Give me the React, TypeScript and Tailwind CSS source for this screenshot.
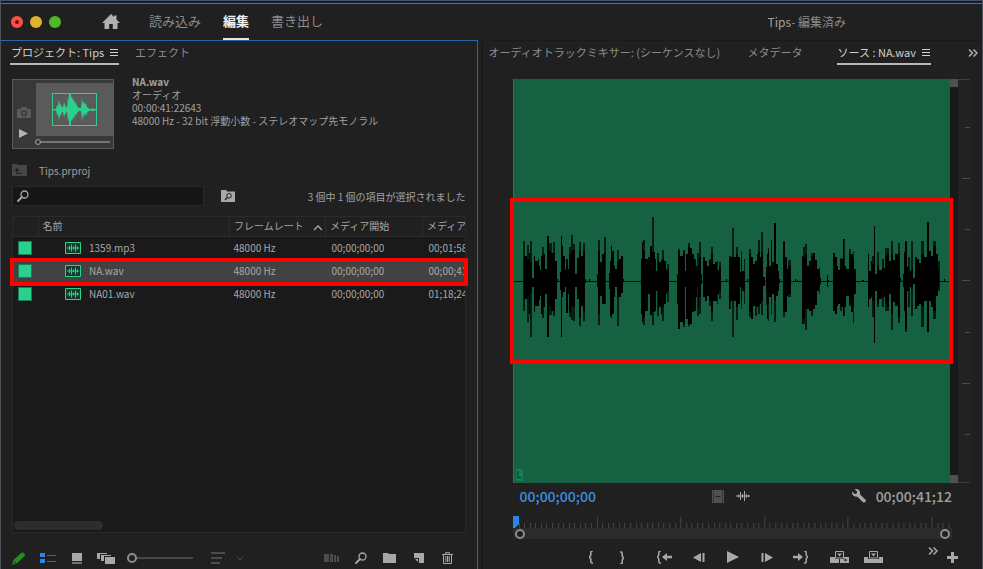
import type { ReactNode } from "react";

type Bar = [number, number, number, number];

// Each bar: start, end, top, bottom, in thirds of a pixel, measured per section.
const SECTION_A: Bar[] = [
  [69, 78, 197, 325], [78, 84, 205, 320], [84, 87, 187, 370], [87, 92, 215, 307], [92, 98, 262, 290],
  [98, 102, 197, 363], [102, 111, 212, 345], [111, 114, 205, 345], [114, 117, 225, 327], [117, 120, 238, 315],
  [120, 126, 195, 370], [126, 132, 190, 350], [132, 138, 235, 310], [138, 144, 135, 440], [141, 150, 180, 345],
  [150, 162, 187, 360], [162, 168, 210, 325], [168, 171, 265, 275], [177, 180, 245, 298], [180, 184, 135, 440],
  [184, 187, 165, 320], [187, 192, 197, 305], [192, 195, 237, 290], [195, 201, 205, 368], [201, 204, 235, 310],
  [204, 210, 190, 365], [210, 216, 182, 345], [216, 222, 178, 348], [222, 228, 250, 290], [228, 234, 203, 325],
  [234, 240, 180, 380], [240, 245, 195, 345], [245, 251, 180, 360], [251, 254, 265, 276], [264, 267, 266, 274],
  [288, 291, 250, 290], [291, 297, 180, 370], [297, 303, 215, 315], [303, 308, 190, 340], [308, 313, 185, 338],
  [324, 327, 247, 295], [327, 330, 210, 375], [330, 334, 165, 383], [334, 339, 180, 370], [339, 342, 225, 320],
  [342, 348, 235, 290], [348, 354, 210, 320], [354, 360, 205, 320], [360, 365, 195, 308], [365, 369, 266, 275],
  [420, 423, 205, 370], [423, 427, 155, 393], [427, 432, 180, 380], [432, 440, 205, 360], [440, 447, 200, 310],
];
const SECTION_B: Bar[] = [
  [-3, 4, 165, 372], [4, 12, 185, 365], [12, 15, 205, 360], [15, 20, 240, 300], [20, 24, 205, 355],
  [24, 30, 215, 350], [30, 35, 207, 370], [35, 40, 205, 350], [40, 45, 210, 340], [45, 50, 238, 310],
  [50, 56, 235, 300], [80, 84, 250, 340], [82, 88, 180, 415], [88, 98, 195, 395], [98, 102, 185, 400],
  [102, 106, 240, 290], [106, 111, 190, 385], [111, 117, 170, 400], [117, 123, 172, 400], [123, 129, 190, 365],
  [129, 135, 205, 360], [135, 138, 225, 320], [138, 142, 238, 290], [142, 145, 225, 350], [145, 151, 200, 320],
  [151, 154, 250, 280], [156, 162, 200, 320], [162, 168, 212, 332], [168, 174, 225, 315], [174, 180, 212, 330],
  [180, 186, 190, 365], [186, 192, 220, 330], [192, 198, 215, 332], [198, 204, 238, 310], [204, 210, 230, 300],
  [226, 229, 266, 273], [236, 239, 205, 355], [239, 256, 198, 330], [256, 261, 190, 350], [261, 268, 200, 340],
  [268, 271, 245, 290], [271, 274, 205, 330], [274, 282, 240, 300], [288, 291, 266, 273], [294, 300, 190, 365],
  [300, 306, 200, 385], [306, 312, 220, 345], [312, 318, 210, 345], [318, 321, 190, 350], [321, 327, 185, 345],
  [327, 330, 200, 340], [330, 336, 185, 330], [336, 342, 258, 285], [345, 348, 230, 300], [348, 351, 190, 385],
  [351, 356, 180, 340], [356, 360, 225, 320], [360, 363, 150, 320], [363, 369, 213, 310], [369, 375, 97, 330],
  [375, 381, 220, 315], [381, 386, 240, 302], [386, 389, 265, 276], [397, 402, 155, 360], [402, 408, 200, 365],
  [408, 413, 235, 315], [413, 420, 225, 310], [432, 435, 266, 274], [438, 442, 267, 274],
];
const SECTION_C: Bar[] = [
  [5, 8, 195, 400], [8, 12, 200, 385], [12, 18, 190, 355], [18, 24, 225, 355], [24, 30, 210, 360],
  [30, 36, 195, 360], [36, 42, 187, 355], [42, 48, 207, 342], [48, 54, 235, 300], [54, 59, 238, 290],
  [59, 62, 262, 280], [78, 81, 255, 288], [81, 86, 267, 274], [96, 102, 187, 360], [102, 108, 200, 370],
  [108, 112, 225, 345], [112, 118, 238, 340], [118, 126, 205, 350], [126, 130, 145, 375], [130, 136, 225, 350],
  [136, 144, 235, 315], [144, 150, 190, 340], [150, 156, 190, 365], [156, 161, 205, 350], [161, 166, 235, 310],
  [183, 190, 267, 273], [202, 205, 190, 350], [205, 210, 240, 325], [210, 214, 210, 320], [214, 219, 220, 330],
  [219, 223, 105, 458], [223, 229, 250, 300], [229, 234, 225, 340], [234, 243, 238, 325], [243, 252, 232, 320],
  [252, 258, 195, 340], [258, 264, 190, 350], [264, 270, 210, 310], [270, 276, 190, 370], [276, 282, 208, 335],
  [282, 291, 190, 345], [291, 297, 188, 380], [297, 300, 262, 275], [306, 309, 250, 290], [309, 312, 185, 360],
  [312, 318, 155, 415], [318, 324, 230, 300], [324, 330, 240, 290], [330, 336, 235, 295], [336, 342, 262, 280],
  [342, 348, 200, 355], [348, 354, 205, 345], [354, 362, 218, 340], [362, 369, 190, 345], [369, 380, 200, 330],
  [380, 384, 95, 425], [384, 391, 180, 330], [391, 398, 195, 350], [398, 405, 165, 360], [405, 411, 190, 315],
  [411, 415, 235, 290], [430, 434, 266, 273],
];
// Short peaks that are drawn lighter than the body of the wave.
const PEAKS: Bar[] = [
  [66, 72, 150, 360], [78, 83, 162, 395], [87, 92, 150, 440], [123, 129, 170, 382], [144, 153, 158, 372],
  [157, 163, 155, 375], [204, 210, 170, 380], [210, 216, 132, 387], [216, 222, 160, 390], [234, 240, 155, 405],
  [245, 251, 158, 390], [291, 297, 147, 403], [308, 314, 140, 340], [348, 354, 178, 407], [427, 432, 147, 403],
  [453, 459, 78, 403], [468, 474, 187, 375], [485, 490, 178, 392], [500, 506, 220, 335], [532, 538, 175, 415],
  [548, 552, 178, 410], [561, 567, 158, 405], [589, 595, 187, 375], [595, 601, 155, 370], [624, 630, 205, 345],
  [630, 636, 168, 392], [648, 651, 212, 340], [654, 660, 215, 325], [685, 690, 195, 355], [693, 699, 112, 440],
  [706, 712, 168, 388], [720, 724, 180, 355], [729, 732, 205, 340], [744, 750, 175, 380], [762, 768, 210, 375],
  [771, 777, 147, 370], [780, 786, 123, 372], [795, 798, 230, 342], [801, 806, 172, 390], [810, 813, 147, 372],
  [819, 825, 97, 395], [847, 853, 150, 380], [863, 870, 208, 320], [908, 913, 170, 400], [912, 918, 160, 418],
  [930, 936, 187, 375], [954, 959, 230, 310], [978, 981, 252, 290], [1018, 1024, 203, 362], [1026, 1032, 145, 377],
  [1044, 1050, 175, 345], [1056, 1061, 182, 398], [1114, 1119, 195, 380], [1129, 1134, 183, 350],
  [1143, 1149, 205, 350], [1152, 1164, 172, 360], [1170, 1176, 150, 418], [1191, 1197, 158, 397],
  [1212, 1218, 150, 425], [1222, 1227, 200, 350], [1230, 1236, 150, 375], [1262, 1269, 150, 410],
  [1280, 1286, 118, 425], [1298, 1305, 152, 385], [1311, 1317, 210, 300],
];

const drawBars = (bars: Bar[]) => bars.map(([a, b, t, d]) => `M${a} ${t}H${b}V${d}H${a}Z`).join("");

function Waveform() {
  return (
    <svg className="block h-[180px] w-full" viewBox="39 1 1311 540" preserveAspectRatio="none" shapeRendering="crispEdges" aria-hidden="true">
      <path d={drawBars(PEAKS)} fill="#000" opacity="0.7" />
      <path d={drawBars(SECTION_A)} />
      <path d={drawBars(SECTION_B)} transform="translate(450 0)" />
      <path d={drawBars(SECTION_C)} transform="translate(900 0)" />
      <path d="M39 270H1350V273H39Z" opacity="0.8" />
    </svg>
  );
}

function Icon({ w, h, children, className = "" }: { w: number; h: number; children: ReactNode; className?: string }) {
  return (
    <svg width={w} height={h} viewBox={`0 0 ${w} ${h}`} className={`shrink-0 ${className}`} fill="currentColor" aria-hidden="true">
      {children}
    </svg>
  );
}

function IconButton({ label, className = "", children }: { label: string; className?: string; children: ReactNode }) {
  return (
    <button type="button" aria-label={label} className={`flex shrink-0 items-center justify-center ${className}`}>
      {children}
    </button>
  );
}

const MenuIcon = () => (
  <Icon w={8} h={7}><path d="M0 0H8V1H0ZM0 3H8V4H0ZM0 6H8V7H0Z" /></Icon>
);

const SearchIcon = () => (
  <Icon w={12} h={12}>
    <circle cx="7.5" cy="4.5" r="3.5" fill="none" stroke="currentColor" strokeWidth="1.3" />
    <path d="M5 7L1 11" stroke="currentColor" strokeWidth="1.8" strokeLinecap="round" />
  </Icon>
);

const DoubleChevron = () => (
  <Icon w={10} h={8}><path d="M1 0.5L4.5 4L1 7.5M5.5 0.5L9 4L5.5 7.5" fill="none" stroke="currentColor" strokeWidth="1.5" /></Icon>
);

const ClipIcon = () => (
  <Icon w={16} h={12} className="text-[#2bd08c]">
    <path d="M0.5 0.5H15.5V11.5H0.5Z" fill="#123c2c" stroke="currentColor" />
    <path d="M2 6H14M4.5 4V8M6.5 2.5V9.5M8.5 4.5V7.5M10.5 2.5V9.5M12.5 4.5V7.5" stroke="currentColor" />
  </Icon>
);

const SLIDER =
  "block h-3 cursor-pointer appearance-none bg-transparent [&::-webkit-slider-runnable-track]:h-[2px] [&::-webkit-slider-thumb]:appearance-none [&::-webkit-slider-thumb]:rounded-full [&::-webkit-slider-thumb]:border-solid";

const FILES = [
  { name: "1359.mp3", rate: "48000 Hz", start: "00;00;00;00", end: "00;01;58", selected: false },
  { name: "NA.wav", rate: "48000 Hz", start: "00;00;00;00", end: "00;00;41", selected: true },
  { name: "NA01.wav", rate: "48000 Hz", start: "00;00;00;00", end: "01;18;24", selected: false },
];

function TopBar() {
  return (
    <header className="flex h-9 shrink-0 items-center text-[13px] text-[#8c8c8c]">
      <div className="flex gap-[7px] pl-[10px]">
        <button type="button" aria-label="閉じる" className="flex size-3 items-center justify-center rounded-full bg-[#fc4f48]">
          <span className="size-1 rounded-full bg-[#7d0a06]" />
        </button>
        <button type="button" aria-label="しまう" className="size-3 rounded-full bg-[#e0b32c]" />
        <button type="button" aria-label="拡大" className="size-3 rounded-full bg-[#4dba29]" />
      </div>
      <IconButton label="ホーム" className="ml-[41px] text-[#b0b0b0]">
        <Icon w={18} h={16}>
          <path d="M9 0L12 3V1.5H14.5V5.5L18 9H15.5V15H10.8V10H7.2V15H2.5V9H0Z" />
        </Icon>
      </IconButton>
      <nav className="ml-[29px] flex h-full gap-[22px]">
        <button type="button" className="border-b-2 border-transparent">読み込み</button>
        <button type="button" className="border-b-2 border-[#e6e6e6] font-bold text-[#f0f0f0]">編集</button>
        <button type="button" className="border-b-2 border-transparent">書き出し</button>
      </nav>
      <p className="mr-[136px] ml-auto text-[12px]"><span className="text-[#a0a0a0]">Tips</span>- 編集済み</p>
    </header>
  );
}

function Preview() {
  return (
    <div className="flex h-[70px] w-[102px] shrink-0 border border-[#5a5a5a] bg-[#383838]">
      <div className="flex w-[23px] flex-col items-center gap-[11px] pt-[27px] pr-[2px]">
        <IconButton label="ポスターフレーム" className="text-[#5a5a5a]">
          <Icon w={14} h={11}>
            <path fillRule="evenodd" d="M0 2H3.5L4.5 0H9.5L10.5 2H14V11H0ZM7 3.2A3 3 0 1 0 7 9.2A3 3 0 1 0 7 3.2ZM7 4.5A1.7 1.7 0 1 1 7 7.9A1.7 1.7 0 1 1 7 4.5Z" />
          </Icon>
        </IconButton>
        <IconButton label="プレビュー再生" className="text-[#b4b4b4]">
          <Icon w={9} h={9}><path d="M0 0L9 4.5L0 9Z" /></Icon>
        </IconButton>
      </div>
      <div className="flex flex-1 flex-col pt-[3px]">
        <div className="flex flex-1 items-center justify-center bg-[#5a5a5a]">
          <Icon w={45} h={33} className="text-[#2bd08c]">
            <rect x="0.5" y="0.5" width="44" height="32" fill="none" stroke="currentColor" />
            <path d="M1 16H4L5 12L6 13L7 7L8 11L9 12L10 14H11L12 9L13 12L14 14L15 15L16 3L17 8V1H19V5L20 3L21 8L22 6L23 11L24 9L25 13L27 15H29L30 5L31 11L32 8L33 12L34 10L35 14L37 15.5L39 16L41 15.5L42 16H44V17.5H42L41 18.5L39 17.5L37 18L35 20L34 23L33 20L32 25L31 21L30 28L29 18H27L25 20L24 23L23 21L22 26L21 24L20 29L19 26V32H17V24L16 29L15 18L14 20L13 21L12 25L11 19H10L9 22L8 23L7 27L6 21L5 22L4 17.5H1Z" />
          </Icon>
        </div>
        <input
          type="range"
          aria-label="再生位置"
          defaultValue={0}
          className={`${SLIDER} -ml-px h-2 w-[75px] [&::-webkit-slider-runnable-track]:bg-[#747474] [&::-webkit-slider-thumb]:-mt-[2px] [&::-webkit-slider-thumb]:size-[6px] [&::-webkit-slider-thumb]:border [&::-webkit-slider-thumb]:border-[#a0a0a0] [&::-webkit-slider-thumb]:bg-[#383838]`}
        />
      </div>
    </div>
  );
}

function FileTable() {
  const th = "overflow-hidden border-r border-[#2b2b2b] pl-1 text-left font-normal whitespace-nowrap";
  const td = "overflow-hidden pl-1 whitespace-nowrap";
  return (
    <table className="w-full table-fixed border-collapse text-[10px] leading-[14px] text-[#a8a8a8]">
      <colgroup>
        <col className="w-[25px]" />
        <col />
        <col className="w-24" />
        <col className="w-[97px]" />
        <col className="w-[42px]" />
      </colgroup>
      <thead>
        <tr className="h-[19px] border-b border-[#2b2b2b] bg-[#202020]">
          <th className={th} aria-label="ラベル" />
          <th className={th}>名前</th>
          <th className={th}>
            <div className="flex items-center justify-between pr-[2px]">
              フレームレート
              <Icon w={10} h={6} className="mt-1"><path d="M1 5L5 1L9 5" fill="none" stroke="currentColor" strokeWidth="1.3" /></Icon>
            </div>
          </th>
          <th className={th}>メディア開始</th>
          <th className={`${th} border-r-0`}>メディア</th>
        </tr>
      </thead>
      <tbody>
        {FILES.map((f) => (
          <tr key={f.name} className={f.selected ? "relative h-[23px] bg-[#424242]" : "h-[23px]"}>
            <td className="pl-[5px]">
              <span className="block size-[14px] border border-[#1b7c55] bg-[#28d18c]" />
              {f.selected && (
                <span className="pointer-events-none absolute -inset-x-[3px] -top-px -bottom-1 z-10 border-4 border-[#ff0000]" />
              )}
            </td>
            <td className={td}>
              <div className="flex items-center gap-2 pl-[23px]"><ClipIcon />{f.name}</div>
            </td>
            <td className={td}>{f.rate}</td>
            <td className={`${td} pl-[6px]`}>{f.start}</td>
            <td className={`${td} pl-[6px]`}>{f.end}</td>
          </tr>
        ))}
      </tbody>
    </table>
  );
}

function ListTools() {
  return (
    <div className="flex h-9 shrink-0 items-center pt-[14px] pl-[11px] text-[#a8a8a8]">
      <IconButton label="書き込み可能" className="text-[#1d921d]">
        <Icon w={14} h={13}><path d="M0 13L1.5 8L9.5 0.8Q10.5 -0.2 12 1.2Q13.8 2.8 12.6 4L5 11.3ZM2 11.5L4 10.8L2.7 9.4Z" fillRule="evenodd" /></Icon>
      </IconButton>
      <IconButton label="リスト表示" className="ml-[14px] text-[#2b84ea]">
        <Icon w={16} h={10}><path d="M0 0H5V4H0ZM0 6H5V10H0Z" /><path d="M7 2H16V3H7ZM7 8H16V9H7Z" opacity="0.75" /></Icon>
      </IconButton>
      <IconButton label="アイコン表示" className="ml-4">
        <Icon w={10} h={11}><path d="M0 0H10V8H0Z" /><path d="M0 9H10V11H0Z" opacity="0.6" /></Icon>
      </IconButton>
      <IconButton label="フリーフォーム表示" className="ml-[15px]">
        <Icon w={18} h={11}><path d="M0 0H10V1H3V6H0ZM4 2H14V3H7V8H4ZM8 4H18V11H8Z" /></Icon>
      </IconButton>
      <input
        type="range"
        aria-label="サムネールのサイズ"
        defaultValue={0}
        className={`${SLIDER} ml-3 w-[66px] [&::-webkit-slider-runnable-track]:bg-[#474747] [&::-webkit-slider-thumb]:-mt-1 [&::-webkit-slider-thumb]:size-[10px] [&::-webkit-slider-thumb]:border-2 [&::-webkit-slider-thumb]:border-[#8c8c8c] [&::-webkit-slider-thumb]:bg-[#202020]`}
      />
      <IconButton label="並べ替え" className="ml-[18px] gap-[11px] text-[#4c4c4c]">
        <Icon w={14} h={12}><path d="M0 0H14V2H0ZM0 5H11V7H0ZM0 10H9V12H0Z" /></Icon>
        <Icon w={8} h={5}><path d="M1 0.5L4 4L7 0.5" fill="none" stroke="currentColor" /></Icon>
      </IconButton>
      <div className="mr-6 ml-auto flex items-center">
        <IconButton label="シーケンスに自動化" className="text-[#4c4c4c]">
          <Icon w={15} h={8}><path d="M0 0H5V8H0ZM6 0H9V8H6ZM10 1H12V8H10ZM13 2H15V8H13Z" /></Icon>
        </IconButton>
        <IconButton label="検索" className="ml-4"><SearchIcon /></IconButton>
        <IconButton label="新規ビン" className="ml-4">
          <Icon w={13} h={10}><path d="M0 0H5L6 1H13V10H0Z" /></Icon>
        </IconButton>
        <IconButton label="新規項目" className="ml-[18px]">
          <Icon w={10} h={10}><path d="M0 0H10V10H5V5H0Z" /><path d="M1 6H4V9Z" /></Icon>
        </IconButton>
        <IconButton label="消去" className="ml-[18px]">
          <Icon w={11} h={12}><path d="M0 2.5H11M3.5 2.5V0.7H7.5V2.5M1.5 3V11.5H9.5V3M3.8 4V10M5.5 4V10M7.2 4V10" fill="none" stroke="currentColor" /></Icon>
        </IconButton>
      </div>
    </div>
  );
}

function ProjectPanel() {
  return (
    <section className="flex min-h-0 min-w-0 flex-col border-t border-r border-[#2767a8] bg-[#202020] text-[#a0a0a0]">
      <nav className="flex h-6 items-stretch pl-[9px] text-[11px]">
        <button type="button" className="flex items-center gap-[6px] border-b-2 border-[#b8b8b8] pr-px pl-px text-[#d0d0d0]">
          プロジェクト: Tips<MenuIcon />
        </button>
        <button type="button" className="ml-4 border-b-2 border-transparent text-[#8c8c8c]">エフェクト</button>
      </nav>
      <div className="flex gap-[18px] pl-[11px]">
        <div className="pt-[14px]"><Preview /></div>
        <div className="pt-[10px] text-[10px] leading-[13px]">
          <p className="font-bold">NA.wav</p>
          <p>オーディオ</p>
          <p>00:00:41:22643</p>
          <p>48000 Hz - 32 bit 浮動小数 - ステレオマップ先モノラル</p>
        </div>
      </div>
      <div className="mt-[13px] flex h-4 items-center gap-3 pl-[11px] text-[10px]">
        <IconButton label="上の階層へ" className="text-[#464646]">
          <Icon w={15} h={12}><path fillRule="evenodd" d="M0 0H5L6 1H15V12H0ZM5 4L2.5 7H4.5V10H10V9H5.5V7H7.5Z" /></Icon>
        </IconButton>
        Tips.prproj
      </div>
      <div className="mt-2 mr-[11px] flex h-5 items-center pl-[11px] text-[10px]">
        <label className="flex h-5 w-48 items-center border border-[#292929] bg-[#161616] pl-1 text-[#a8a8a8]">
          <SearchIcon />
          <input type="search" aria-label="プロジェクト内を検索" className="h-full w-full min-w-0 bg-transparent px-2 outline-none" />
        </label>
        <IconButton label="検索ビンを作成" className="ml-[17px] text-[#a8a8a8]">
          <Icon w={14} h={12}>
            <path d="M0 0H5L6 1.5H14V12H0Z" />
            <circle cx="8" cy="5.8" r="2.3" fill="none" stroke="#202020" />
            <path d="M6.3 7.5L4 10" stroke="#202020" strokeWidth="1.4" />
          </Icon>
        </IconButton>
        <p className="ml-auto whitespace-nowrap">3 個中 1 個の項目が選択されました</p>
      </div>
      <div className="mt-[10px] mr-[11px] ml-[11px] flex flex-1 flex-col border border-[#2a2a2a] bg-[#1a1a1a]">
        <FileTable />
        <div className="mt-auto mb-[2px] ml-px h-[9px] w-[89px] rounded-full bg-[#2d2d2d]" />
      </div>
      <ListTools />
    </section>
  );
}

function Meter() {
  return (
    <div className="flex w-5 shrink-0">
      <div className="flex w-2 flex-col justify-between bg-[#191919]">
        <span className="h-2 bg-[#505050]" />
        <span className="h-2 bg-[#505050]" />
      </div>
      <div className="flex flex-1 flex-col items-end justify-between border-y border-[#3c3c3c] bg-[#222222] py-[47px]">
        {[0, 1, 2, 3, 4, 5, 6].map((i) => (
          <span key={i} className={i % 2 ? "h-px w-2 bg-[#4a4a4a]" : "h-px w-[5px] bg-[#4a4a4a]"} />
        ))}
      </div>
    </div>
  );
}

function TimeRuler() {
  const ticks = Array.from({ length: 78 }, (_, i) => i + 1);
  return (
    <div className="mr-[18px]">
      <svg className="block h-3 w-full overflow-visible" viewBox="0 0 439 12" preserveAspectRatio="none" aria-hidden="true">
        {ticks.map((i) => (
          <path key={i} d={`M${Math.round(i * 5.573)} ${i % 15 ? 7 : 1}h1V12h-1Z`} fill="#454545" />
        ))}
        <path d="M0 0H6V8L2 12H0Z" fill="#2b84ea" />
      </svg>
      <div className="flex h-[11px] items-center justify-between bg-[#2b2b2b] px-[2px]">
        <button type="button" aria-label="表示範囲の開始" className="size-[10px] rounded-full border-2 border-[#8c8c8c] bg-[#202020]" />
        <button type="button" aria-label="表示範囲の終了" className="size-[10px] rounded-full border-2 border-[#8c8c8c] bg-[#202020]" />
      </div>
    </div>
  );
}

const BRACE_OPEN = "M4 0H3Q1.8 0 1.8 1.5V4L0.5 6L1.8 8V10.5Q1.8 12 3 12H4";

function Transport() {
  return (
    <div className="flex h-[30px] shrink-0 items-center pt-[6px] pl-[94px] text-[#a8a8a8]">
      <IconButton label="インをマーク" className="w-[30px]">
        <Icon w={5} h={13}><path d={BRACE_OPEN} fill="none" stroke="currentColor" strokeWidth="1.6" /></Icon>
      </IconButton>
      <IconButton label="アウトをマーク" className="w-[30px]">
        <Icon w={5} h={13} className="rotate-180"><path d={BRACE_OPEN} fill="none" stroke="currentColor" strokeWidth="1.6" /></Icon>
      </IconButton>
      <div className="ml-3 flex gap-[2px]">
        <IconButton label="インへ移動" className="w-8">
          <Icon w={15} h={13}>
            <path d={BRACE_OPEN} fill="none" stroke="currentColor" strokeWidth="1.5" />
            <path d="M5 6L10 2V4.7H15V7.3H10V10Z" />
          </Icon>
        </IconButton>
        <IconButton label="1フレーム前へ戻る" className="w-8">
          <Icon w={12} h={9}><path d="M0 4.5L8 0V9ZM9.5 0H11.5V9H9.5Z" /></Icon>
        </IconButton>
        <IconButton label="再生" className="w-8">
          <Icon w={12} h={12}><path d="M0 0L12 6L0 12Z" /></Icon>
        </IconButton>
        <IconButton label="1フレーム先へ進む" className="w-8">
          <Icon w={12} h={9}><path d="M12 4.5L4 0V9ZM2.5 0H0.5V9H2.5Z" /></Icon>
        </IconButton>
        <IconButton label="アウトへ移動" className="w-8">
          <Icon w={15} h={13}>
            <path d={BRACE_OPEN} fill="none" stroke="currentColor" strokeWidth="1.5" transform="translate(15 0) scale(-1 1)" />
            <path d="M10 6L5 2V4.7H0V7.3H5V10Z" />
          </Icon>
        </IconButton>
      </div>
      <IconButton label="インサート" className="ml-[6px] w-[34px]">
        <Icon w={19} h={12}>
          <path d="M5.5 0.5H13.5V7H5.5Z" fill="none" stroke="currentColor" />
          <path d="M7 2.5H12L9.5 5.5Z" />
          <path d="M0 6H5V8H9V12H0Z" />
          <path d="M10 8H14V6H19V12H10ZM14.5 7.5V10.5L17.5 9Z" fillRule="evenodd" />
        </Icon>
      </IconButton>
      <IconButton label="上書き" className="w-[34px]">
        <Icon w={19} h={12}>
          <path d="M5.5 0.5H13.5V7H5.5Z" fill="none" stroke="currentColor" />
          <path d="M7 2.5H12L9.5 5.5Z" />
          <path d="M0 6H4V8H15V6H19V12H0Z" />
        </Icon>
      </IconButton>
      <div className="mr-6 ml-auto flex items-center gap-[9px]">
        <IconButton label="その他のボタン" className="mb-3"><DoubleChevron /></IconButton>
        <IconButton label="ボタンエディター">
          <Icon w={11} h={11}><path d="M4 0H7V4H11V7H7V11H4V7H0V4H4Z" /></Icon>
        </IconButton>
      </div>
    </div>
  );
}

function SourcePanel() {
  return (
    <section className="flex min-h-0 min-w-0 flex-col border-t border-l-2 border-[#1a1a1a] bg-[#202020] text-[#8c8c8c]">
      <nav className="flex h-6 items-stretch pl-[6px] text-[11px] whitespace-nowrap">
        <button type="button" className="border-b-2 border-transparent">オーディオトラックミキサー: (シーケンスなし)</button>
        <button type="button" className="ml-auto border-b-2 border-transparent">メタデータ</button>
        <button type="button" className="ml-[34px] flex items-center gap-[6px] border-b-2 border-[#b8b8b8] px-px text-[#d0d0d0]">
          ソース : NA.wav<MenuIcon />
        </button>
        <IconButton label="その他のパネル" className="mr-1 ml-[37px] text-[#b0b0b0]"><DoubleChevron /></IconButton>
      </nav>
      <div className="mt-[14px] mr-[12px] ml-[30px] flex min-h-0 flex-1 flex-col">
        <div className="flex flex-1">
          <div className="relative flex flex-1 flex-col justify-center border-l border-[#2767a8] bg-[#156142]">
            <Waveform />
            <div className="pointer-events-none absolute -right-[3px] -left-1 top-1/2 h-[166px] -translate-y-1/2 border-4 border-[#ff0000]" />
            <span className="absolute bottom-[2px] left-[2px] flex h-3 w-[7px] items-center justify-center bg-[#1b7a52] text-[9px] text-[#0a1f16]">L</span>
          </div>
          <Meter />
        </div>
        <div className="mr-[18px] flex h-[26px] items-center pl-[7px] text-[14px] font-medium">
          <time className="text-[#3a90e2]">00;00;00;00</time>
          <div className="mr-auto ml-auto flex items-center gap-3 pl-[14px]">
            <IconButton label="ビデオのみドラッグ" className="text-[#505050]">
              <Icon w={12} h={13}>
                <path d="M0 0H12V13H0Z" />
                <path d="M1.5 1V13M10.5 1V13" stroke="#202020" strokeDasharray="1 1" />
                <path d="M3.5 6.5H8.5" stroke="#202020" />
              </Icon>
            </IconButton>
            <IconButton label="オーディオのみドラッグ" className="text-[#a8a8a8]">
              <Icon w={14} h={10}><path d="M0 5H14M2.5 3.5V6.5M4.5 1V9M6.5 3V7M8.5 0V10M10.5 3V7M12.5 4V6" stroke="currentColor" /></Icon>
            </IconButton>
          </div>
          <IconButton label="設定" className="mr-[10px] text-[#a8a8a8]">
            <Icon w={14} h={14}>
              <path d="M2.6 0.3Q6 -0.8 7.7 2Q8.4 3.6 7.9 5.2L13.5 10.8Q14.3 12 13.3 13.1Q12.2 14 11 13.2L5.5 7.7Q2.3 8.3 0.6 5.8Q-0.2 4.3 0.2 2.6L2.5 5L4.7 4.6L5.1 2.6Z" />
            </Icon>
          </IconButton>
          <time className="text-[#a0a0a0]">00;00;41;12</time>
        </div>
        <div className="mt-[7px]"><TimeRuler /></div>
      </div>
      <Transport />
    </section>
  );
}

export default function App() {
  return (
    <div className="flex h-screen min-w-[800px] flex-col overflow-hidden border-x border-[#4d535c] bg-[#202020] font-['Noto_Sans_CJK_JP','Noto_Sans',sans-serif]">
      <div className="h-1 shrink-0 border-t border-b border-t-[#43526a] border-b-[#6b6f75] bg-[#101d30]" />
      <TopBar />
      <main className="grid min-h-0 flex-1 grid-cols-[477fr_502fr] gap-x-[3px] bg-[#202020]">
        <ProjectPanel />
        <SourcePanel />
      </main>
    </div>
  );
}
